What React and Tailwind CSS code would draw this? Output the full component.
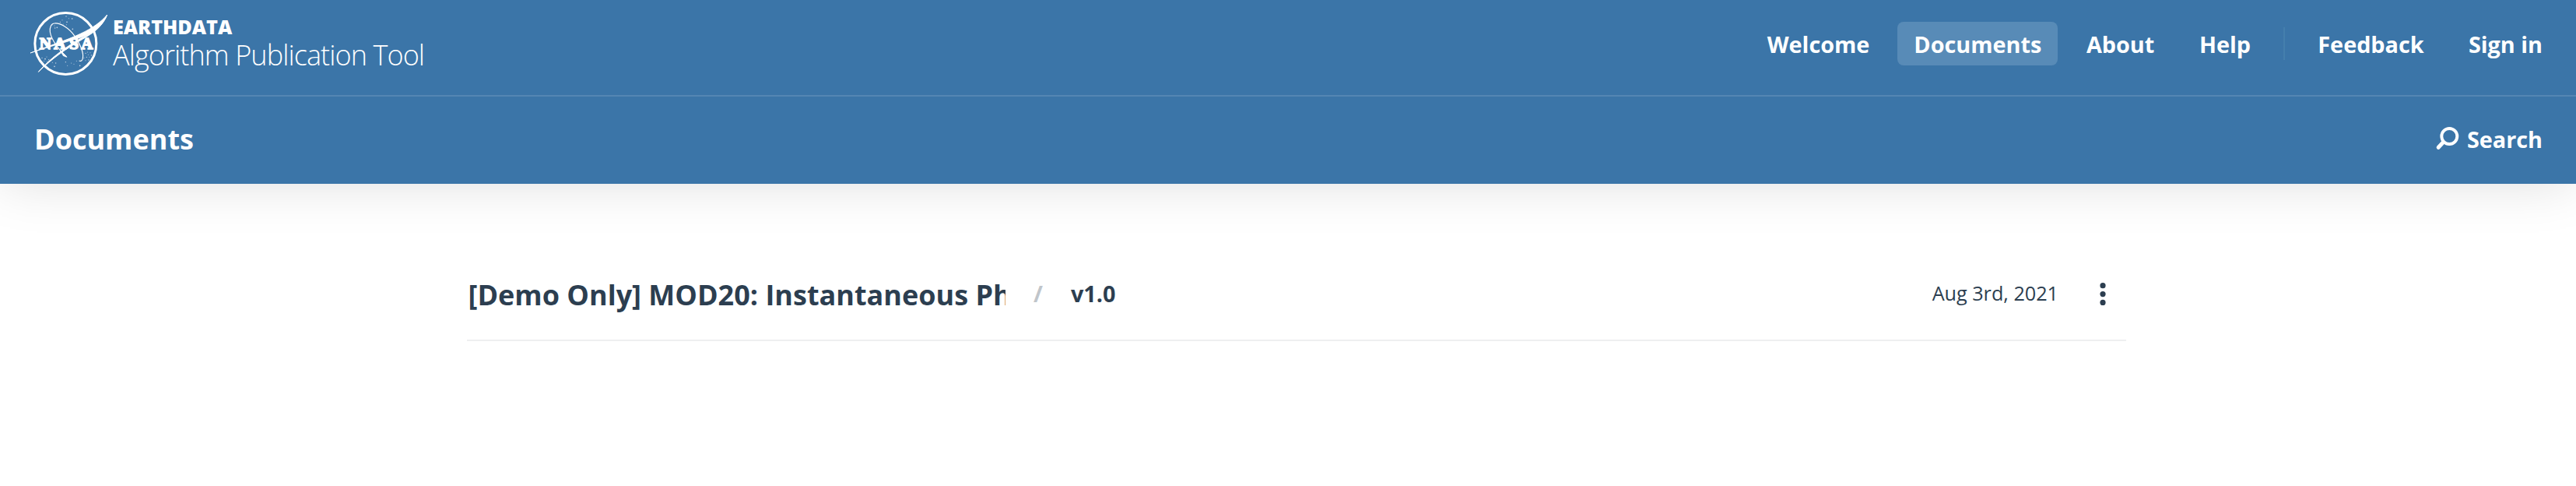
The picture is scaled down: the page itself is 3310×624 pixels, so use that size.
const stars = [
  [165, 48, 2], [150, 62, 1.5], [142, 70, 2], [168, 70, 2.5], [175, 56, 1.5], [188, 57, 2.5], [166, 80, 1.5], [190, 97, 2.5],
  [120, 84, 1.5], [130, 91, 2.5], [122, 93, 2], [112, 80, 1.5], [155, 78, 1.2],
  [72, 208, 2], [84, 212, 2.5], [90, 204, 1.5], [98, 215, 2], [80, 220, 1.5], [92, 222, 1.5], [120, 241, 2.5], [125, 228, 2], [112, 226, 1.5],
  [163, 224, 2], [170, 238, 1.5], [185, 228, 1.5], [195, 232, 1.5], [218, 238, 2.5], [205, 220, 1.5],
  [240, 190, 2], [250, 196, 1.5], [244, 205, 2], [255, 205, 1.5], [262, 198, 2], [252, 216, 2], [240, 218, 1.5], [262, 212, 1.5], [247, 186, 1.5], [258, 188, 1.5], [234, 208, 1.5],
];

function NasaLogo() {
  return (
    <svg className="h-[100px] w-[115px] shrink-0" viewBox="0 0 345 300" fill="none" stroke="#fff">
      <circle cx="163" cy="153" r="118.5" strokeWidth="9" />
      <path d="M166 204C140 180 108 140 103 108C101 90 108 75 119 75C142 71 178 94 198 124C218 154 234 186 229 210C227 219 222 222 215 219" strokeWidth="3.5" />
      <text x="62 118 178 223" y="174" fill="#fff" strokeWidth="5" className="font-['Liberation_Serif',serif] text-[63px] font-bold">NASA</text>
      <path d="M27 189C95 163 165 141 220 115C270 92 300 68 323 42C310 82 268 112 222 129C165 147 95 166 27 189Z" fill="#fff" strokeWidth="2.5" />
      <path d="M58 262C105 208 160 170 215 136C260 112 300 90 322 44C300 94 268 112 228 136C165 173 108 212 58 262Z" fill="#fff" strokeWidth="3" />
      <path d="M142 180L160 196L168 205L154 200Z" fill="#fff" strokeWidth="2" />
      <g fill="#fff" stroke="none" opacity="0.75">
        {stars.map(([x, y, r]) => (
          <circle key={`${x}-${y}`} cx={x} cy={y} r={r} />
        ))}
      </g>
    </svg>
  );
}

export default function App() {
  return (
    <div className="h-[624px] w-full overflow-hidden bg-white font-['Open_Sans',sans-serif] text-[#2c3e50]">
      <header className="h-[236px] bg-[#3b75a8] text-white shadow-[0_0_64px_0_rgba(0,0,0,0.13)]">
        <div className="flex h-[124px] items-start justify-between border-b-2 border-[#5486b3] pr-[43px]">
          <a className="flex pl-[30px] pt-[5px]">
            <NasaLogo />
            <span className="flex flex-col whitespace-nowrap pt-3">
              <span className="text-[25.2px] leading-[34px] font-extrabold">EARTHDATA</span>
              <span className="text-[36px] leading-[40px] font-light tracking-[-0.9px]">Algorithm Publication Tool</span>
            </span>
          </a>
          <nav className="flex items-center whitespace-nowrap pt-7 text-[28.8px] leading-[55px] font-bold">
            <a className="pt-px">Welcome</a>
            <a className="ml-9 rounded-lg bg-[#588bb7] px-[21px] pt-px">Documents</a>
            <a className="ml-[36.7px] pt-px">About</a>
            <a className="ml-[57.6px] pt-px">Help</a>
            <span className="ml-[42.2px] h-[42px] w-0.5 bg-[#447fad]" />
            <a className="ml-[42.2px] pt-px">Feedback</a>
            <a className="ml-[57.3px] pt-px">Sign in</a>
          </nav>
        </div>
        <div className="flex h-[110px] items-center justify-between pr-[43px] pl-11 font-bold">
          <h1 className="text-[36px] leading-[48px]">Documents</h1>
          <a className="flex items-center gap-[9px] text-[28.8px] leading-[48px]">
            <svg className="h-8 w-8" viewBox="0 1 32 32" fill="none" stroke="#fff">
              <circle cx="18.3" cy="13" r="10" strokeWidth="3.9" />
              <path d="M10.5 20.5L4.2 27.3" strokeWidth="5" strokeLinecap="round" />
            </svg>
            Search
          </a>
        </div>
      </header>
      <main className="pl-[600px] pt-[100px]">
        <article className="flex h-[102px] w-[2132px] items-start justify-between border-b-2 border-[#eeeff0]">
          <div className="flex items-start whitespace-nowrap font-bold">
            <h2 className="w-[692px] overflow-hidden pl-[1.5px] pt-[19px] text-[36px] leading-[48px]">[Demo Only] MOD20: Instantaneous Ph</h2>
            <span className="ml-9 pt-[17px] text-[28.8px] leading-[48px] text-[#c0c5ca]">/</span>
            <span className="ml-9 pt-[17px] text-[28.8px] leading-[48px]">v1.0</span>
          </div>
          <div className="flex items-start pr-[14px]">
            <time className="pt-4 text-[25.2px] leading-[48px]">Aug 3rd, 2021</time>
            <svg className="mt-[25.6px] ml-[41px] h-8 w-8" viewBox="0 0.4 32 32" fill="#2c3e50">
              <circle cx="16" cy="5.1" r="3.6" />
              <circle cx="16" cy="16" r="3.6" />
              <circle cx="16" cy="26.8" r="3.6" />
            </svg>
          </div>
        </article>
      </main>
    </div>
  );
}
